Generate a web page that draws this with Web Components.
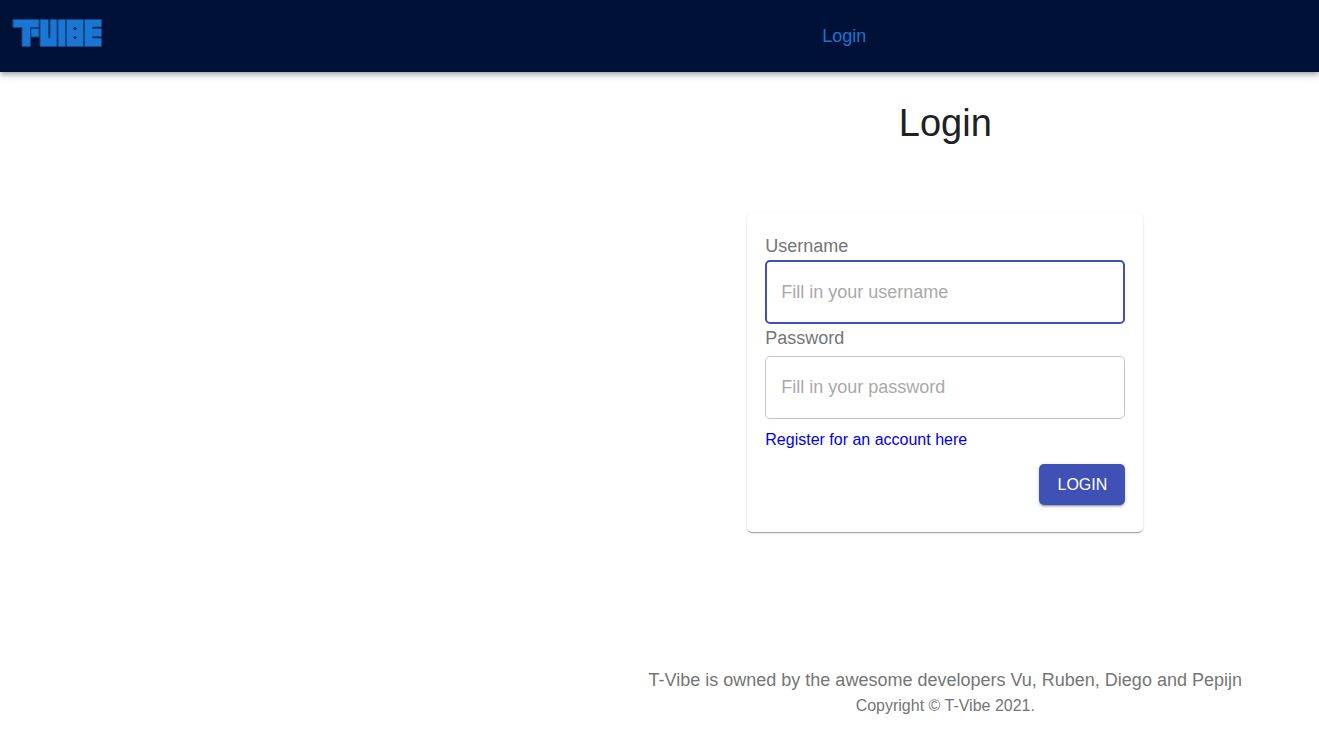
<!DOCTYPE html>
<html lang="en">
<head>
<meta charset="utf-8">
<meta name="viewport" content="width=device-width, initial-scale=1">
<title>T-Vibe</title>
<style>
  body { margin: 0; background: #fff; color: #212121; font: 18px/27px "Liberation Sans", Arial, sans-serif; }
</style>
</head>
<body>
<tv-header><a slot="nav" href="#login">Login</a></tv-header>
<tv-page>
  <span slot="title">Login</span>
  <tv-login-card>
    <tv-field label="Username" name="username" type="text" placeholder="Fill in your username" active></tv-field>
    <tv-field label="Password" name="password" type="password" placeholder="Fill in your password"></tv-field>
    <a slot="link" href="#register">Register for an account here</a>
    <tv-button slot="action">Login</tv-button>
  </tv-login-card>
  <tv-footer slot="footer">
    T-Vibe is owned by the awesome developers Vu, Ruben, Diego and Pepijn
    <span slot="copyright">Copyright © T-Vibe 2021.</span>
  </tv-footer>
</tv-page>

<script>
const define = (name, html, setup) => {
  const template = document.createElement('template');
  template.innerHTML = html;
  customElements.define(name, class extends HTMLElement {
    constructor() {
      super();
      this.attachShadow({ mode: 'open' }).append(template.content.cloneNode(true));
    }
    connectedCallback() { if (setup) setup(this, this.shadowRoot); }
  });
};

define('tv-logo', `
  <style>
    :host { display: block; }
    svg { display: block; }
  </style>
  <svg width="92" height="30" viewBox="0 0 92 30" role="img" aria-label="T-Vibe">
    <g fill="#1976d2" stroke="#0e4688" stroke-width="1">
      <path d="M1 1.5H27V9.5H18.5V28.5H10V9.5H1Z"/>
      <path d="M19 10.5H27V19H19Z"/>
      <path d="M28 1.5H36.5V20H38V1.5H45V28.5H28Z"/>
      <path d="M46 1.5H53.5V28.5H46Z"/>
      <path d="M54.5 1.5H71.5V28.5H54.5Z"/>
      <path d="M72.5 1.5H89.5V9H80.5V10.5H89.5V18.5H80.5V20H89.5V28.5H72.5Z"/>
    </g>
    <path fill="#0a2c60" d="M61 10H62V9H64V10H65V11H64V12H62V11H61ZM61 19H62V18H64V19H65V20H64V21H62V20H61Z"/>
  </svg>`);

define('tv-header', `
  <style>
    :host { display: block; position: relative; }
    header {
      display: grid; grid-template-columns: 7fr 18fr; align-items: center;
      height: 72px; background: #001138;
      box-shadow: 0 2px 4px -1px rgba(0,0,0,.2), 0 4px 5px rgba(0,0,0,.14), 0 1px 11px rgba(0,0,0,.12);
    }
    .home { display: block; width: 92px; margin-left: 12px; margin-bottom: 6px; }
    nav { display: flex; justify-content: center; }
    ::slotted(a) { color: #1976d2; text-decoration: none; }
  </style>
  <header>
    <a class="home" href="#home" aria-label="T-Vibe home"><tv-logo></tv-logo></a>
    <nav><slot name="nav"></slot></nav>
  </header>`);

define('tv-page', `
  <style>
    :host { display: grid; grid-template-columns: 13fr 17fr; }
    main { grid-column: 2; display: flex; flex-direction: column; align-items: center; padding: 27px 0 20px; }
    h1 { margin: 0 0 66px; font-size: 38px; line-height: 48px; font-weight: 400; }
    .footer { margin-top: 134px; }
  </style>
  <main>
    <h1><slot name="title"></slot></h1>
    <slot></slot>
    <div class="footer"><slot name="footer"></slot></div>
  </main>`);

define('tv-login-card', `
  <style>
    :host { display: block; width: 100%; max-width: 396px; }
    form {
      box-sizing: border-box; padding: 19px 18px 27px; border-radius: 5px; background: #fff;
      box-shadow: 0 2px 1px -1px rgba(0,0,0,.2), 0 1px 1px rgba(0,0,0,.14), 0 1px 3px rgba(0,0,0,.12);
    }
    .fields { display: grid; }
    .link { margin-top: 9px; font-size: 16px; line-height: 24px; }
    .action { display: flex; justify-content: flex-end; margin-top: 12px; }
    ::slotted(a) { color: #00e; text-decoration: none; }
  </style>
  <form>
    <div class="fields"><slot></slot></div>
    <div class="link"><slot name="link"></slot></div>
    <div class="action"><slot name="action"></slot></div>
  </form>`);

define('tv-field', `
  <style>
    :host { display: grid; gap: 4px; }
    :host([active]) { gap: 0; }
    label { color: #757575; line-height: 28px; }
    input {
      box-sizing: border-box; width: 100%; height: 63px; padding: 0 15px;
      border: 1px solid #c4c4c4; border-radius: 5px; background: transparent;
      color: #212121; font: inherit; outline: none;
    }
    input::placeholder { color: #a9a9a9; opacity: 1; }
    input:focus, :host([active]) input { height: 64px; padding: 0 14px; border: 2px solid #3f51b5; }
  </style>
  <label for="control"></label>
  <input id="control">`, (host, root) => {
  root.querySelector('label').textContent = host.getAttribute('label');
  for (const key of ['name', 'type', 'placeholder'])
    root.querySelector('input').setAttribute(key, host.getAttribute(key));
});

define('tv-button', `
  <style>
    :host { display: block; }
    button {
      display: block; padding: 7px 18px; border: 0; border-radius: 5px;
      background: #3f51b5; color: #fff; font: inherit; font-size: 16px; line-height: 27px;
      text-transform: uppercase; cursor: pointer;
      box-shadow: 0 3px 1px -2px rgba(0,0,0,.2), 0 2px 2px rgba(0,0,0,.14), 0 1px 5px rgba(0,0,0,.12);
    }
  </style>
  <button type="button"><slot></slot></button>`);

define('tv-footer', `
  <style>
    :host { display: block; }
    footer { color: #757575; text-align: center; }
    p { margin: 0; line-height: 28px; }
    .copyright { font-size: 16px; line-height: 24px; }
  </style>
  <footer>
    <p><slot></slot></p>
    <p class="copyright"><slot name="copyright"></slot></p>
  </footer>`);
</script>
</body>
</html>
